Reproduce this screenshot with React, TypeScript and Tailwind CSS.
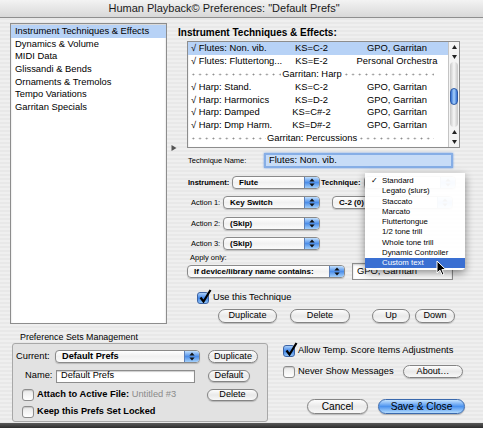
import React from "react";

const ui = "font-['Liberation_Sans',Arial,sans-serif]";
const stripes =
  "bg-[repeating-linear-gradient(180deg,#efefef_0px,#efefef_2px,#e8e8e8_2px,#e8e8e8_4px)]";

function Arrows() {
  return (
    <svg width="6" height="9" viewBox="0 0 6 9">
      <path d="M3 0.5 L5.6 3.6 H0.4 Z" fill="#111" />
      <path d="M3 8.5 L5.6 5.4 H0.4 Z" fill="#111" />
    </svg>
  );
}

function Popup({
  className,
  children,
}: {
  className: string;
  children?: React.ReactNode;
}) {
  return (
    <div
      className={`flex shrink-0 items-stretch overflow-hidden rounded-[4px] border border-[#8a8a8a] bg-gradient-to-b from-white via-[#f1f1f1] to-[#fbfbfb] shadow-[0_1px_1px_rgba(0,0,0,0.18)] ${className}`}
    >
      <div className="flex flex-1 items-center truncate pl-[6px] font-bold">{children}</div>
      <div className="flex w-[15px] items-center justify-center border-l border-[#5b7fb8] bg-gradient-to-b from-[#c2e0fd] via-[#4c8ee9] to-[#a4d0fa]">
        <Arrows />
      </div>
    </div>
  );
}

function Btn({
  className,
  children,
}: {
  className: string;
  children: React.ReactNode;
}) {
  return (
    <div
      className={`flex shrink-0 items-center justify-center rounded-full border border-[#848484] bg-gradient-to-b from-[#fdfdfd] via-[#e9e9e9] to-[#f8f8f8] shadow-[0_1px_1px_rgba(0,0,0,0.2)] ${className}`}
    >
      {children}
    </div>
  );
}

function Check({ on }: { on?: boolean }) {
  if (on)
    return (
      <div className="relative h-[12px] w-[12px] shrink-0 rounded-[3px] border border-[#3d63a3] bg-gradient-to-b from-[#a9cffa] via-[#3f84e6] to-[#8ec2f8]">
        <svg className="absolute -top-[4px] left-[1px]" width="13" height="14" viewBox="0 0 13 14">
          <path d="M1.5 8.5 L4.5 12.5 L11.5 1" fill="none" stroke="#000" strokeWidth="2.2" />
        </svg>
      </div>
    );
  return (
    <div className="h-[12px] w-[12px] shrink-0 rounded-[3px] border border-[#8d8d8d] bg-gradient-to-b from-[#e9e9e9] to-white shadow-[inset_0_1px_1px_rgba(0,0,0,0.15)]" />
  );
}

function Tri({ up }: { up?: boolean }) {
  return (
    <div className="flex h-[10px] items-center justify-center">
      <svg width="5" height="4" viewBox="0 0 5 4">
        {up ? <path d="M2.5 0 L5 4 H0 Z" fill="#222" /> : <path d="M2.5 4 L5 0 H0 Z" fill="#222" />}
      </svg>
    </div>
  );
}

function Dots() {
  return (
    <div className="h-[3px] flex-1 bg-[radial-gradient(circle,#8a8a8a_0.7px,transparent_1.2px)] bg-[length:6.7px_3px]" />
  );
}

const sections = [
  "Instrument Techniques & Effects",
  "Dynamics & Volume",
  "MIDI Data",
  "Glissandi & Bends",
  "Ornaments & Tremolos",
  "Tempo Variations",
  "Garritan Specials",
];

type Row = { a: string; b: string; c: string } | { sep: string };

const rows: Row[] = [
  { a: "√ Flutes: Non. vib.", b: "KS=C-2", c: "GPO, Garritan" },
  { a: "√ Flutes: Fluttertong...", b: "KS=E-2", c: "Personal Orchestra" },
  { sep: "Garritan: Harp" },
  { a: "√ Harp: Stand.", b: "KS=C-2", c: "GPO, Garritan" },
  { a: "√ Harp: Harmonics", b: "KS=D-2", c: "GPO, Garritan" },
  { a: "√ Harp: Damped", b: "KS=C#-2", c: "GPO, Garritan" },
  { a: "√ Harp: Dmp Harm.", b: "KS=D#-2", c: "GPO, Garritan" },
  { sep: "Garritan: Percussions" },
];

const techniques = [
  "Standard",
  "Legato (slurs)",
  "Staccato",
  "Marcato",
  "Fluttertongue",
  "1/2 tone trill",
  "Whole tone trill",
  "Dynamic Controller",
  "Custom text",
];

function SideList() {
  return (
    <div className="h-[301px] w-[157px] shrink-0 border border-[#8d8d8d] bg-white pt-[1px] shadow-[inset_0_1px_2px_rgba(0,0,0,0.2)]">
      {sections.map((s, i) => (
        <div
          key={s}
          className={`h-[12.7px] pl-[4px] text-[9.4px] leading-[12.7px] ${i === 0 ? "bg-[#b7d2f6]" : ""}`}
        >
          {s}
        </div>
      ))}
    </div>
  );
}

function TechList() {
  return (
    <div className="flex h-[107px] w-[273px] shrink-0 border border-[#8d8d8d] bg-white shadow-[inset_0_1px_2px_rgba(0,0,0,0.2)]">
      <div className="flex-1 text-[9.4px]">
        {rows.map((r, i) =>
          "sep" in r ? (
            <div key={i} className="flex h-[12.9px] items-center pl-[2px] pr-[14px] leading-[12.9px]">
              <Dots />
              <span className="px-[1px]">{r.sep}</span>
              <Dots />
            </div>
          ) : (
            <div
              key={i}
              className={`flex h-[12.9px] leading-[12.9px] ${i === 0 ? "bg-[#b7d2f6]" : ""}`}
            >
              <div className="w-[97px] truncate pl-[3px]">{r.a}</div>
              <div className="w-[53px] text-center">{r.b}</div>
              <div className="flex-1 pl-[8px] text-center">{r.c}</div>
            </div>
          )
        )}
      </div>
      <div className="flex w-[11px] flex-col border-l border-[#c4c4c4] bg-[#f4f4f4]">
        <Tri up />
        <Tri />
        <div className="mx-[1px] flex-1 rounded-full bg-gradient-to-r from-[#c6c6c6] via-[#f7f7f7] to-[#c6c6c6]">
          <div className="mt-[26px] h-[17px] rounded-full border border-[#2c5aa6] bg-gradient-to-r from-[#3670d2] via-[#a6d0fb] to-[#3670d2]" />
        </div>
        <Tri up />
        <Tri />
      </div>
    </div>
  );
}

function TechPanel() {
  return (
    <div className="ml-[3px] flex w-[313px] flex-col">
      <div className="mt-[4px] h-[12px] pl-[8px] text-[10px] font-bold leading-[12px]">
        Instrument Techniques &amp; Effects:
      </div>
      <div className="mt-[2px] flex items-end">
        <svg className="mb-[-3px] ml-[1px]" width="6" height="6" viewBox="0 0 6 6">
          <path d="M0.5 0 L5.5 3 L0.5 6 Z" fill="#555" />
        </svg>
        <div className="ml-[10px]">
          <TechList />
        </div>
      </div>

      <div className="mt-[5px] flex h-[15px] items-center">
        <div className="ml-[18px] w-[76px] text-[7.5px]">Technique Name:</div>
        <div className="flex h-[15px] w-[189px] items-center border-[2px] border-[#86aee6] bg-[#c7dcf7] pl-[3px] text-[9.4px] shadow-[0_0_2px_#6d9de0]">
          Flutes: Non. vib.
        </div>
      </div>

      <div className="mt-[8px] flex h-[13px] items-center text-[7.5px]">
        <div className="ml-[18px] w-[44px] font-bold">Instrument:</div>
        <Popup className="h-[13px] w-[88px] text-[8px]">Flute</Popup>
        <div className="ml-[1px] w-[43px] font-bold">Technique:</div>
        <Popup className="h-[13px] w-[92px] text-[8px]" />
      </div>

      <div className="mt-[7px] flex h-[13px] items-center text-[7.5px]">
        <div className="ml-[21px] w-[32px]">Action 1:</div>
        <Popup className="h-[13px] w-[97px] text-[8px]">Key Switch</Popup>
        <Popup className="ml-[12px] h-[13px] w-[121px] text-[8px]">C-2 (0)</Popup>
      </div>

      <div className="mt-[8px] flex h-[13px] items-center text-[7.5px]">
        <div className="ml-[21px] w-[32px]">Action 2:</div>
        <Popup className="h-[13px] w-[97px] text-[8px]">(Skip)</Popup>
      </div>

      <div className="mt-[7px] flex h-[13px] items-center text-[7.5px]">
        <div className="ml-[21px] w-[32px]">Action 3:</div>
        <Popup className="h-[13px] w-[97px] text-[8px]">(Skip)</Popup>
      </div>

      <div className="mt-[3px] ml-[20px] h-[10px] text-[7.5px] leading-[10px]">Apply only:</div>

      <div className="flex h-[17px] items-center">
        <Popup className="ml-[17px] h-[13px] w-[158px] text-[8px]">If device/library name contains:</Popup>
        <div className="ml-[7px] flex h-[17px] w-[101px] items-center border border-[#8d8d8d] bg-white pl-[4px] text-[9.4px] shadow-[inset_0_1px_2px_rgba(0,0,0,0.2)]">
          GPO, Garritan
        </div>
      </div>

      <div className="mt-[12px] flex h-[12px] items-center text-[9.3px]">
        <div className="ml-[27px]">
          <Check on />
        </div>
        <span className="ml-[4px]">Use this Technique</span>
      </div>

      <div className="mt-[5px] flex h-[14px] text-[9.1px]">
        <Btn className="ml-[48px] h-[14px] w-[59px]">Duplicate</Btn>
        <Btn className="ml-[13px] h-[14px] w-[60px]">Delete</Btn>
        <Btn className="ml-[22px] h-[14px] w-[38px]">Up</Btn>
        <Btn className="ml-[5px] h-[14px] w-[40px]">Down</Btn>
      </div>
    </div>
  );
}

function PrefSets() {
  return (
    <div className="flex w-[268px] shrink-0 flex-col pl-[12px]">
      <div className="mt-[8px] h-[10px] pl-[8px] text-[8.9px] leading-[10px]">Preference Sets Management</div>
      <div className="mt-[1px] flex h-[79px] w-[256px] flex-col rounded-[3px] border border-[#a8a8a8] bg-[#e2e2e2]">
        <div className="mt-[6px] flex h-[13px] items-center">
          <div className="w-[42px] pl-[3px] text-[9.3px]">Current:</div>
          <Popup className="h-[13px] w-[145px] text-[9.2px]">Default Prefs</Popup>
          <Btn className="ml-[8px] h-[13px] w-[50px] text-[9.1px]">Duplicate</Btn>
        </div>
        <div className="mt-[7px] flex h-[12px] items-center">
          <div className="w-[43px] pl-[12px] text-[9.3px]">Name:</div>
          <div className="flex h-[13px] w-[139px] items-center border border-[#8d8d8d] bg-white pl-[4px] text-[9.2px] shadow-[inset_0_1px_1px_rgba(0,0,0,0.2)]">
            Default Prefs
          </div>
          <Btn className="ml-[13px] h-[12px] w-[42px] text-[9.1px]">Default</Btn>
        </div>
        <div className="mt-[7px] flex h-[12px] items-center">
          <div className="ml-[9px]">
            <Check />
          </div>
          <div className="ml-[3px] w-[170px] text-[9.3px]">
            <span className="font-bold">Attach to Active File:</span>{" "}
            <span className="text-[#8a8a8a]">Untitled #3</span>
          </div>
          <Btn className="h-[12px] w-[51px] text-[9.1px]">Delete</Btn>
        </div>
        <div className="mt-[5px] flex h-[12px] items-center">
          <div className="ml-[9px]">
            <Check />
          </div>
          <div className="ml-[3px] text-[9.2px] font-bold">Keep this Prefs Set Locked</div>
        </div>
      </div>
    </div>
  );
}

function MainActions() {
  return (
    <div className="flex flex-1 flex-col text-[9.3px]">
      <div className="mt-[21px] flex h-[12px] items-center">
        <div className="ml-[15px]">
          <Check on />
        </div>
        <span className="ml-[3px]">Allow Temp. Score Items Adjustments</span>
      </div>
      <div className="mt-[8px] flex h-[13px] items-center">
        <div className="ml-[15px]">
          <Check />
        </div>
        <span className="ml-[3px] w-[105px]">Never Show Messages</span>
        <Btn className="h-[13px] w-[60px] text-[9.1px]">About…</Btn>
      </div>
      <div className="mt-[21px] flex h-[15px] items-center text-[10.2px]">
        <Btn className="ml-[39px] h-[15px] w-[61px]">Cancel</Btn>
        <div className="ml-[10px] flex h-[15px] w-[87px] items-center justify-center rounded-full border border-[#3a69ad] bg-gradient-to-b from-[#c4e2fd] via-[#4b92ee] to-[#b2dafc] shadow-[0_1px_1px_rgba(0,0,0,0.25)]">
          Save &amp; Close
        </div>
      </div>
    </div>
  );
}

function TechniqueMenu() {
  return (
    <div className="absolute left-[365px] top-[173px] h-[97px] w-[100px] rounded-b-[4px] bg-white/[0.96] pt-[3px] text-[7.8px] shadow-[0_3px_9px_rgba(0,0,0,0.45)]">
      {techniques.map((t, i) => (
        <div
          key={t}
          className={`flex h-[10.25px] items-center leading-[10.25px] ${
            i === techniques.length - 1 ? "bg-[#3a6fd2] text-white" : ""
          }`}
        >
          <span className="w-[17px] pl-[6px]">{i === 0 ? "✓" : ""}</span>
          <span>{t}</span>
        </div>
      ))}
    </div>
  );
}

function Cursor() {
  return (
    <svg className="absolute left-[436px] top-[260px]" width="11" height="16" viewBox="0 0 11 16">
      <path
        d="M1 1 L1 13 L4 10.2 L6.2 15 L8 14.2 L5.9 9.6 L9.8 9.6 Z"
        fill="#000"
        stroke="#fff"
        strokeWidth="1"
        strokeLinejoin="round"
      />
    </svg>
  );
}

export default function App() {
  return (
    <div className={`relative flex h-[428px] w-[483px] flex-col overflow-hidden text-black ${ui} ${stripes}`}>
      <div className="flex h-[18px] shrink-0 items-center justify-center border-b border-[#8e8e8e] bg-gradient-to-b from-[#f3f3f3] to-[#d8d8d8] pr-[35px] text-[11px] leading-none text-[#1a1a1a]">
        Human Playback© Preferences: "Default Prefs"
      </div>

      <div className="flex h-[306px] shrink-0 pl-[10px] pt-[5px]">
        <SideList />
        <TechPanel />
      </div>

      <div className="flex h-[99px] shrink-0">
        <PrefSets />
        <MainActions />
      </div>

      <div className="h-[5px] shrink-0 bg-gradient-to-b from-[#5b5b5b] to-[#2d2d2d]" />

      <TechniqueMenu />
      <Cursor />
    </div>
  );
}
